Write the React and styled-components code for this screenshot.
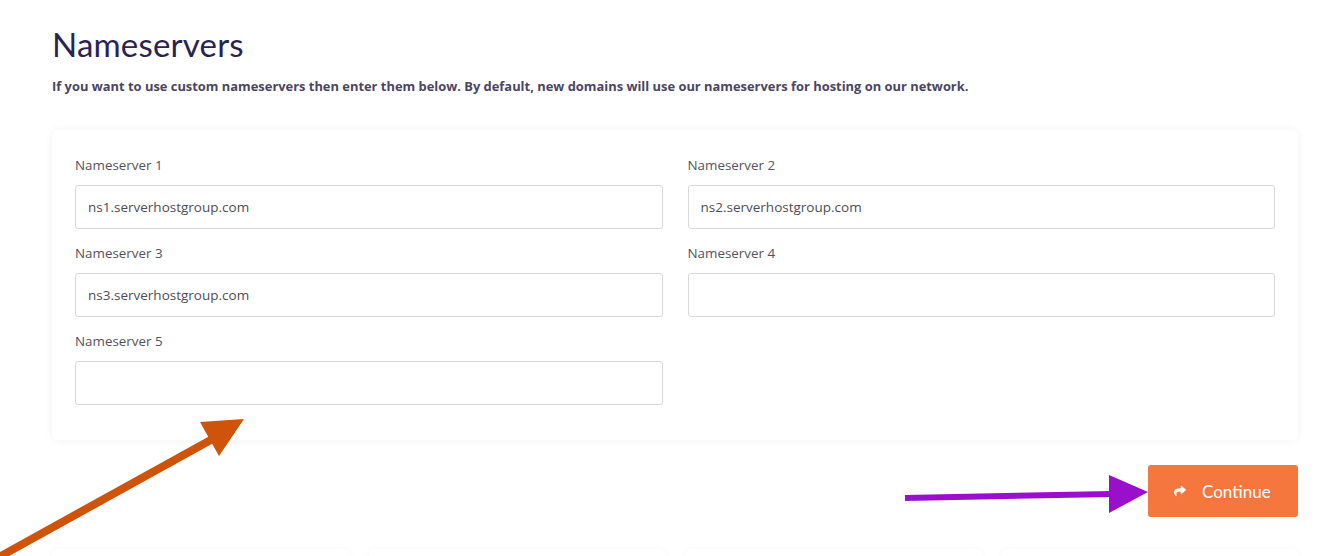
import React from "react";
import styled, { createGlobalStyle } from "styled-components";
import { FaShare } from "react-icons/fa";

const GlobalStyle = createGlobalStyle`
    html, body {
        margin: 0;
        padding: 0;
        background: #ffffff;
        overflow: hidden;
    }
    body {
        font-family: "Open Sans", Lato, sans-serif;
    }
`;

const nameservers = [
    { id: 1, value: "ns1.serverhostgroup.com" },
    { id: 2, value: "ns2.serverhostgroup.com" },
    { id: 3, value: "ns3.serverhostgroup.com" },
    { id: 4, value: "" },
    { id: 5, value: "" },
];

const App = () => {
    return (
        <React.Fragment>
            <GlobalStyle />
            <Page>
                <Title>Nameservers</Title>
                <Intro>
                    If you want to use custom nameservers then enter them below. By default, new domains will use our nameservers for hosting on our network.
                </Intro>
                <Card>
                    <FieldGrid>
                        {nameservers.map((ns) => (
                            <Field key={ns.id}>
                                <Label htmlFor={`ns${ns.id}`}>Nameserver {ns.id}</Label>
                                <Input id={`ns${ns.id}`} defaultValue={ns.value} />
                            </Field>
                        ))}
                    </FieldGrid>
                </Card>
                <Actions>
                    <ContinueButton>
                        <FaShare size={12} />
                        <span>Continue</span>
                    </ContinueButton>
                </Actions>
                <BottomCards>
                    <SmallCard />
                    <SmallCard />
                    <SmallCard />
                    <SmallCard />
                </BottomCards>
            </Page>
            <Annotation width="1344" height="556" viewBox="0 0 1344 556">
                <line x1="-10" y1="562" x2="218" y2="436" stroke="#cf5308" strokeWidth="8" />
                <polygon points="200,422 244,419 219,456" fill="#cf5308" />
                <line x1="905" y1="498" x2="1112" y2="494" stroke="#9a0fcb" strokeWidth="6" />
                <polygon points="1109,475 1148,492 1109,513" fill="#9a0fcb" />
            </Annotation>
        </React.Fragment>
    );
};

const Page = styled.div`
    width: 1246px;
    margin: 0 0 0 52px;
    padding-top: 26px;
`;

const Title = styled.h1`
    margin: 0;
    font-family: Lato, sans-serif;
    font-weight: 400;
    font-size: 33px;
    line-height: 36px;
    color: #2a2352;
    letter-spacing: 0.2px;
`;

const Intro = styled.p`
    margin: 15px 0 0;
    font-size: 12.9px;
    font-weight: 700;
    line-height: 18px;
    color: #4b4562;
`;

const Card = styled.div`
    margin-top: 35px;
    background: #ffffff;
    border-radius: 6px;
    box-shadow: 0 0 10px rgba(0, 0, 0, 0.06);
    padding: 25px 23px 35px;
`;

const FieldGrid = styled.div`
    display: grid;
    grid-template-columns: 1fr 1fr;
    column-gap: 25px;
    row-gap: 14px;
`;

const Field = styled.div`
    display: flex;
    flex-direction: column;
`;

const Label = styled.label`
    font-size: 13.4px;
    line-height: 20px;
    color: #55525e;
    margin-bottom: 10px;
`;

const Input = styled.input`
    box-sizing: border-box;
    height: 44px;
    width: 100%;
    border: 1px solid #d8d8d8;
    border-radius: 3px;
    padding: 0 12px;
    font-family: "Open Sans", sans-serif;
    font-size: 13.5px;
    color: #4f4c58;
    outline: none;
    background: #fff;
`;

const Actions = styled.div`
    display: flex;
    justify-content: flex-end;
    margin-top: 25px;
`;

const ContinueButton = styled.button`
    display: flex;
    align-items: center;
    gap: 16px;
    height: 52px;
    width: 150px;
    padding: 0 0 0 26px;
    border: none;
    border-radius: 3px;
    background: #f5773e;
    color: #ffffff;
    font-family: Lato, sans-serif;
    font-size: 17px;
    cursor: pointer;
`;

const BottomCards = styled.div`
    display: grid;
    grid-template-columns: repeat(4, 1fr);
    gap: 20px;
    margin-top: 32px;
`;

const SmallCard = styled.div`
    height: 120px;
    border-radius: 6px;
    background: #fff;
    box-shadow: 0 0 8px rgba(0, 0, 0, 0.035);
`;

const Annotation = styled.svg`
    position: absolute;
    top: 0;
    left: 0;
    pointer-events: none;
`;

export default App;
